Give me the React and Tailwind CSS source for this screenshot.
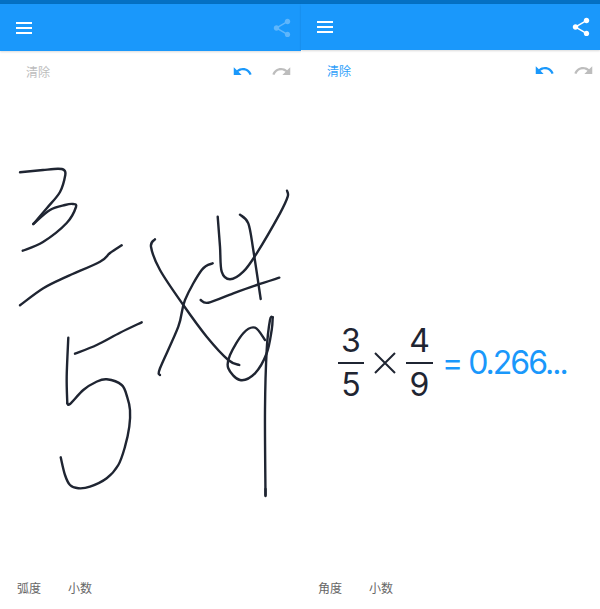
import React from "react";

const CJK = "font-['Roboto','Noto_Sans_CJK_SC',sans-serif]";

// hand strokes, in page coordinates
const strokes = [
  [[20,172.3],[43,170],[58,168.8],[64,170],[65.3,175],[60,192],[47,208],[33.3,224]],
  [[33.3,224],[50,210],[65,205],[73,204],[76,207],[66.7,223],[43,242],[22.7,250.7]],
  [[121.7,245.3],[110,253],[100,261.7],[66.7,276.7],[43.3,288.3],[20,305.3]],
  [[141.7,322.3],[120,332.7],[96.7,345],[75,353.7]],
  [[68.3,337.7],[66.7,376.7],[67.3,403.3]],
  [[67.3,403.3],[70,404],[83.3,390],[96,382],[106.7,379.3],[121.7,385],[127.3,397.3],[130,410],[129.3,426.7],[125,446.7],[118.3,465],[106.7,478.3],[90,486.7],[78.3,488.3],[70,485],[65,475],[60.7,457.3]],
  [[155,239.3],[151,246.7],[160,270],[183.3,305],[206.7,336.7],[228.3,360],[239.3,365]],
  [[212.7,263.3],[201.7,270],[185,300],[178.3,326.7],[160,368.3],[160,375]],
  [[217.7,216.7],[220,246.7],[221.7,271.7],[230,279.3],[243.3,271.7],[256.7,253.3],[280,213.3],[287.7,196.7],[287,190.7]],
  [[240,214.7],[248.3,223.3],[253.3,250],[260.7,299]],
  [[200.7,300],[208.3,302.7],[233.3,293.3],[256.7,285],[279.3,277.7]],
  [[265,340],[255,327.7],[243.3,333.3],[230,355],[228.3,368.3],[240,380],[255,373.3],[266.7,353.3],[271.7,330],[272.7,317.3]],
  [[272.7,317.3],[270,320],[266.7,350],[265,410],[265.5,496]],
  [[265.5,489],[265.5,495]],
];

const toPath = (pts) => {
  let d = `M${pts[0][0]} ${pts[0][1]}`;
  for (let i = 0; i < pts.length - 1; i++) {
    const p0 = pts[i - 1] || pts[i];
    const p1 = pts[i];
    const p2 = pts[i + 1];
    const p3 = pts[i + 2] || p2;
    const c1x = p1[0] + (p2[0] - p0[0]) / 6;
    const c1y = p1[1] + (p2[1] - p0[1]) / 6;
    const c2x = p2[0] - (p3[0] - p1[0]) / 6;
    const c2y = p2[1] - (p3[1] - p1[1]) / 6;
    d += ` C${c1x} ${c1y} ${c2x} ${c2y} ${p2[0]} ${p2[1]}`;
  }
  return d;
};

const Icon = ({ d, className }) => (
  <svg viewBox="0 0 24 24" className={className} fill="currentColor">
    <path d={d} />
  </svg>
);

const SHARE =
  "M18 16.08c-.76 0-1.44.3-1.96.77L8.91 12.7c.05-.23.09-.46.09-.7s-.04-.47-.09-.7l7.05-4.11c.54.5 1.25.81 2.04.81 1.66 0 3-1.34 3-3s-1.34-3-3-3-3 1.34-3 3c0 .24.04.47.09.7L8.04 9.81C7.5 9.31 6.79 9 6 9c-1.66 0-3 1.34-3 3s1.34 3 3 3c.79 0 1.5-.31 2.04-.81l7.12 4.16c-.05.21-.08.43-.08.65 0 1.61 1.31 2.92 2.92 2.92 1.61 0 2.92-1.31 2.92-2.92s-1.31-2.92-2.92-2.92z";
const UNDO =
  "M12.5 8c-2.65 0-5.05.99-6.9 2.6L2 7v9h9l-3.62-3.62c1.39-1.16 3.16-1.88 5.12-1.88 3.54 0 6.55 2.31 7.6 5.5l2.37-.78C21.08 11.03 17.15 8 12.5 8z";
const REDO =
  "M18.4 10.6C16.55 8.99 14.15 8 11.5 8c-4.65 0-8.58 3.03-9.96 7.22L3.9 16c1.05-3.19 4.05-5.5 7.6-5.5 1.95 0 3.73.72 5.12 1.88L13 16h9V7l-3.6 3.6z";

const Fraction = ({ top, bottom, width }) => (
  <div className="flex flex-col items-center font-['Inter',sans-serif] text-[32px] leading-[42px] text-[#1f2532]">
    <span>{top}</span>
    <div className={`h-[2px] bg-[#1f2532] ${width}`} />
    <span>{bottom}</span>
  </div>
);

function Panel({ width, shareClass, clearClass, headerHeight, toolbarPad, unit, children }) {
  return (
    <div className={`flex h-[609px] flex-col bg-white ${width}`}>
      <div className="h-1 bg-[#0470c3]" />
      <header className={`flex items-center justify-between bg-[#1a98fb] pl-4 pr-2 shadow-[0_1px_2px_rgba(0,0,0,0.15)] ${headerHeight}`}>
        <div className="flex w-4 flex-col gap-[3px]">
          <div className="h-[2px] bg-white" />
          <div className="h-[2px] bg-white" />
          <div className="h-[2px] bg-white" />
        </div>
        <Icon d={SHARE} className={`h-[22px] w-[22px] ${shareClass}`} />
      </header>
      <div className={`flex h-10 items-center justify-between pl-[26px] ${toolbarPad}`}>
        <span className={`mt-[3px] text-xs ${clearClass}`}>清除</span>
        <div className="flex items-center gap-[18px]">
          <Icon d={UNDO} className="h-[21px] w-[21px] text-[#1a98fb]" />
          <Icon d={REDO} className="h-[21px] w-[21px] text-[#bdbdbd]" />
        </div>
      </div>
      <main className="min-h-0 flex-1">{children}</main>
      <footer className="flex h-[39px] items-center gap-[27px] pb-[1px] pl-[17px] text-xs text-[#666666]">
        <span>{unit}</span>
        <span>小数</span>
      </footer>
    </div>
  );
}

export default function App() {
  return (
    <div className={`flex h-[609px] w-[600px] overflow-hidden ${CJK}`}>
      <Panel
        width="w-[301px]"
        shareClass="text-[#5fb6fb]"
        clearClass="text-[#bdbdbd]"
        headerHeight="h-[47px]"
        toolbarPad="pr-[9px]"
        unit="弧度"
      >
        <svg viewBox="0 91 301 479" className="h-full w-full" fill="none">
          {strokes.map((pts, i) => (
            <path
              key={i}
              d={toPath(pts)}
              stroke="#1f2532"
              strokeWidth="2.4"
              strokeLinecap="round"
              strokeLinejoin="round"
            />
          ))}
        </svg>
      </Panel>
      <Panel
        width="w-[299px]"
        shareClass="text-white"
        clearClass="text-[#2f9ffa]"
        headerHeight="h-[46px]"
        toolbarPad="pr-[6px]"
        unit="角度"
      >
        <div className="flex h-full items-center pl-[37px] pt-[66px]">
          <Fraction top="3" bottom="5" width="w-[26px]" />
          <svg viewBox="0 0 24 24" className="mx-[9px] h-[24px] w-[24px] text-[#1f2532]" fill="none">
            <path d="M2 2 L22 22 M22 2 L2 22" stroke="currentColor" strokeWidth="2" />
          </svg>
          <Fraction top="4" bottom="9" width="w-[27px]" />
          <span className="ml-[9px] font-['Inter',sans-serif] text-[32px] leading-none tracking-[-0.062em] text-[#1a98fb]">= 0.266...</span>
        </div>
      </Panel>
    </div>
  );
}
